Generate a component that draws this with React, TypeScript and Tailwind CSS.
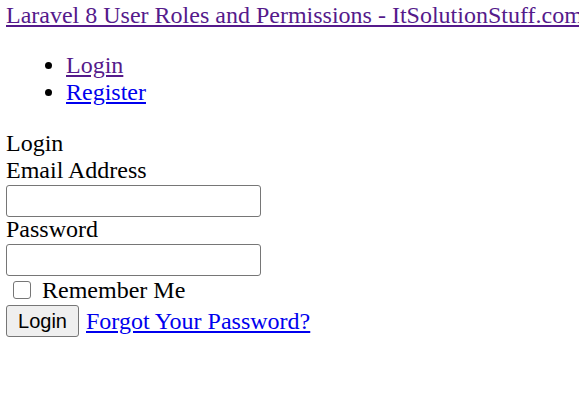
import React from "react";

export default function App() {
  return (
    <div className="min-h-screen bg-white pl-[6px] pt-[2px] font-['Liberation_Serif',serif] text-[24px] leading-[27px] text-black">
      <div className="whitespace-nowrap">
        <a href="#" className="text-[#551a8b] underline">
          Laravel 8 User Roles and Permissions - ItSolutionStuff.com
        </a>
      </div>

      <ul className="my-[23px] list-disc pl-[60px]">
        <li>
          <a href="#" className="text-[#551a8b] underline">Login</a>
        </li>
        <li>
          <a href="#" className="text-[#0000ee] underline">Register</a>
        </li>
      </ul>

      <div className="pt-px">Login</div>
      <form onSubmit={(e) => e.preventDefault()}>
        <div>Email Address</div>
        <div className="h-[33px] pt-px">
          <input type="email" className="block h-[32px] w-[255px] rounded-[3px] border border-[#767676] px-1 text-base" />
        </div>
        <div className="-mt-px">Password</div>
        <div className="h-[33px] pt-px">
          <input type="password" className="block h-[32px] w-[255px] rounded-[3px] border border-[#767676] px-1 text-base" />
        </div>
        <label className="flex h-[28px] items-center">
          <input type="checkbox" className="ml-[7px] mr-[11px] h-[18px] w-[18px] appearance-none rounded-[3px] border border-[#767676] bg-white" />
          <span>Remember Me</span>
        </label>
        <div className="flex items-center pt-px">
          <button type="submit" className="h-[32px] w-[73px] rounded-[3px] border border-[#767676] bg-[#efefef] font-['Liberation_Sans',sans-serif] text-[20px] text-black">
            Login
          </button>
          <a href="#" className="ml-[7px] text-[#0000ee] underline">Forgot Your Password?</a>
        </div>
      </form>
    </div>
  );
}
